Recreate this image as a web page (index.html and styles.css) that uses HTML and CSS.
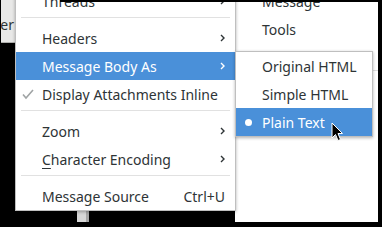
FILE: index.html
```html
<!DOCTYPE html>
<html>
<head>
<title>Message Body As</title>
<link rel="stylesheet" href="styles.css">
</head>
<body>
<div class="desk">
	<!-- window pieces behind the popups -->
	<div class="tool-stub"><span>er</span></div>
	<div class="scroll-stub"></div>
	<div class="back-menu">
		<div class="item">Message</div>
		<div class="item">Tools</div>
		<div class="sep"></div>
	</div>

	<!-- View menu -->
	<div class="menu main-menu">
		<div class="item">Threads <span class="arrow"><svg width="5" height="8" viewBox="0 0 5 8"><polyline points="1,1 4,4 1,7"/></svg></span></div>
		<div class="sep"></div>
		<div class="item">Headers <span class="arrow"><svg width="5" height="8" viewBox="0 0 5 8"><polyline points="1,1 4,4 1,7"/></svg></span></div>
		<div class="item active">Message Body As <span class="arrow"><svg width="5" height="8" viewBox="0 0 5 8"><polyline points="1,1 4,4 1,7"/></svg></span></div>
		<div class="item"><svg class="check" width="12" height="11" viewBox="0 0 12 11"><polyline points="1,5.5 4,9 11,1"/></svg>Display Attachments Inline</div>
		<div class="sep"></div>
		<div class="item">Zoom <span class="arrow"><svg width="5" height="8" viewBox="0 0 5 8"><polyline points="1,1 4,4 1,7"/></svg></span></div>
		<div class="item"><span><u>C</u>haracter Encoding</span> <span class="arrow"><svg width="5" height="8" viewBox="0 0 5 8"><polyline points="1,1 4,4 1,7"/></svg></span></div>
		<div class="sep"></div>
		<div class="item">Message Source <span class="accel">Ctrl+U</span></div>
	</div>

	<!-- submenu -->
	<div class="menu sub-menu">
		<div class="item">Original HTML</div>
		<div class="item">Simple HTML</div>
		<div class="item active"><span class="dot"></span>Plain Text</div>
	</div>

	<svg class="cursor" width="13" height="20" viewBox="0 0 13 20"><path d="M1,1 L1,16 L4.5,12.5 L7,18.5 L9.5,17.5 L7,11.5 L11.5,11.5 Z"/></svg>

	<div class="top-band"></div>
</div>
</body>
</html>
```

FILE: styles.css
```css
body {
	margin: 0;
	background: #000;
	font-family: "Noto Sans", "DejaVu Sans", sans-serif;
	font-size: 14px;
	color: #2e3436;
}
.desk {
	position: relative;
	width: 382px;
	height: 227px;
	overflow: hidden;
}
.top-band {
	position: absolute;
	left: 60px;
	top: 0;
	width: 322px;
	height: 2px;
	background: #000;
}

/* bits of the window behind */
.tool-stub {
	position: absolute;
	left: 1px;
	top: 0;
	width: 14px;
	height: 42px;
	background: #e8e8e7;
	border-bottom: 1px solid #b0b0ad;
	overflow: hidden;
}
.tool-stub span {
	position: absolute;
	right: 1px;
	top: 15px;
}
.scroll-stub {
	position: absolute;
	left: 77px;
	top: 208px;
	width: 9px;
	height: 14px;
	background: #d6d6d6;
	border-right: 3px solid #a6a6a6;
}
.back-menu {
	position: absolute;
	left: 235px;
	top: -12px;
	width: 143px;
	height: 234px;
	background: #fff;
}
.back-menu .item {
	height: 28px;
	line-height: 28px;
	padding-left: 27px;
}
.back-menu .sep {
	margin: 26px 0 0 0;
	height: 1px;
	background: #dcdcdc;
}

/* popup menus */
.menu {
	position: absolute;
	background: #fff;
	border: 1px solid rgba(0, 0, 0, 0.25);
	box-shadow: 0 1px 3px rgba(0, 0, 0, 0.3);
}
.menu .item {
	display: flex;
	align-items: center;
	height: 28px;
	padding: 0 10px 0 26px;
	white-space: nowrap;
	position: relative;
}
.menu .item.active {
	background: #4a90d9;
	color: #fff;
}
.menu .sep {
	height: 1px;
	margin: 2px 5px 6px 5px;
	background: #e1e1e1;
}
.main-menu {
	left: 15px;
	top: -14px;
	width: 219px;
}
.arrow {
	margin-left: auto;
	display: flex;
}
.arrow svg polyline {
	fill: none;
	stroke: #2e3436;
	stroke-width: 1.4;
}
.active .arrow svg polyline {
	stroke: #fff;
}
.check {
	position: absolute;
	left: 6px;
	top: 9px;
}
.check polyline {
	fill: none;
	stroke: #a0a4a5;
	stroke-width: 1.6;
}
.accel {
	margin-left: auto;
}
u {
	text-underline-offset: 3px;
	text-decoration-thickness: 1px;
}
.sub-menu {
	left: 235px;
	top: 51px;
	width: 136px;
}
.dot {
	position: absolute;
	left: 9px;
	top: 11px;
	width: 7px;
	height: 7px;
	border-radius: 50%;
	background: #fff;
}
.cursor {
	position: absolute;
	left: 331px;
	top: 122px;
}
.cursor path {
	fill: #000;
	stroke: #fff;
	stroke-width: 1;
}
```
